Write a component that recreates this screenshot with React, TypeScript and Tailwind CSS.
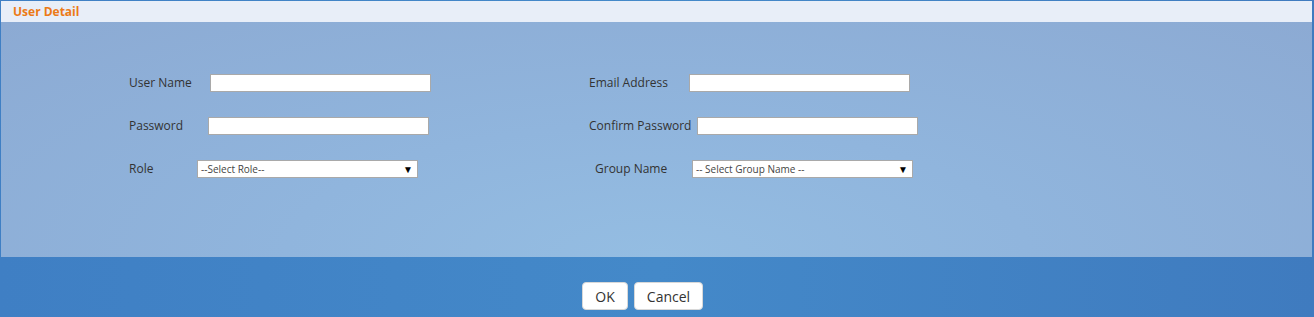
import React from 'react';

function TextField({ label, labelW, ml = '' }: { label: string; labelW: string; ml?: string }) {
  return (
    <div className={`flex items-center h-[18px] ${ml}`}>
      <label className={`${labelW} shrink-0 text-[12px] text-[#333] leading-none`}>{label}</label>
      <input type="text" className="w-[221px] h-[18px] bg-white border border-[#a9a9a9] outline-none" />
    </div>
  );
}

function SelectField({ label, labelW, placeholder, ml = '' }: { label: string; labelW: string; placeholder: string; ml?: string }) {
  return (
    <div className={`flex items-center h-[18px] ${ml}`}>
      <label className={`${labelW} shrink-0 text-[12px] text-[#333] leading-none`}>{label}</label>
      <div className="w-[221px] h-[18px] bg-white border border-[#a9a9a9] flex items-center justify-between pl-[3px] pr-[4px]">
        <span className="text-[10px] text-[#444] leading-none">{placeholder}</span>
        <span className="text-[10px] text-black leading-none">▼</span>
      </div>
    </div>
  );
}

export default function App() {
  return (
    <div
      className="w-[1314px] h-[317px] flex flex-col bg-[linear-gradient(90deg,#3f7fc4_0%,#4489c9_50%,#3f7bbf_100%)] pt-px pl-px pr-[2px] overflow-hidden"
      style={{ fontFamily: '"Open Sans", "Liberation Sans", sans-serif' }}
    >
      <div className="flex flex-col h-[256px]">
        <div className="h-[21px] bg-[#e8eef8] flex items-center pl-[12px]">
          <span className="text-[12px] font-bold text-[#ec7a17] leading-none">User Detail</span>
        </div>
        <div className="flex-1 bg-[radial-gradient(ellipse_at_50%_100%,#94bde2_0%,#90b5dd_40%,#8caad3_100%)] pt-[52px]">
          <div className="flex flex-col gap-[25px]">
            <div className="flex">
              <TextField label="User Name" labelW="w-[81px]" ml="ml-[128px]" />
              <TextField label="Email Address" labelW="w-[100px]" ml="ml-[158px]" />
            </div>
            <div className="flex">
              <TextField label="Password" labelW="w-[79px]" ml="ml-[128px]" />
              <TextField label="Confirm Password" labelW="w-[108px]" ml="ml-[160px]" />
            </div>
            <div className="flex">
              <SelectField label="Role" labelW="w-[68px]" placeholder="--Select Role--" ml="ml-[128px]" />
              <SelectField label="Group Name" labelW="w-[97px]" placeholder="-- Select Group Name --" ml="ml-[177px]" />
            </div>
          </div>
        </div>
      </div>
      <div className="flex justify-center gap-[6px] pt-[25px]">
        <button className="w-[46px] h-[28px] bg-white border border-[#d8d8d8] rounded-[4px] text-[14px] text-[#333] ml-[-28px]">OK</button>
        <button className="w-[69px] h-[28px] bg-white border border-[#d8d8d8] rounded-[4px] text-[14px] text-[#333]">Cancel</button>
      </div>
    </div>
  );
}
